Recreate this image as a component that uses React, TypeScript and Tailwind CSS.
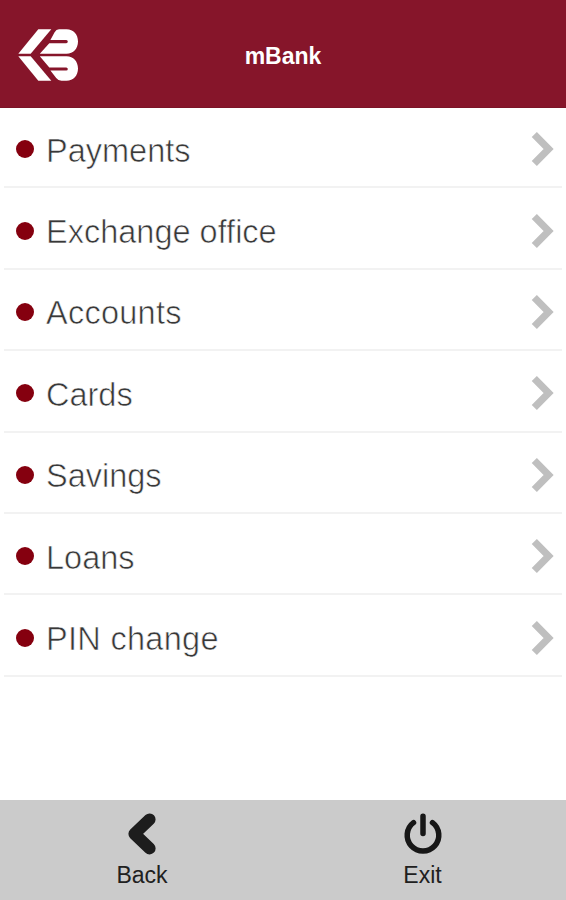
import clsx from "clsx";

type MenuItem = { label: string; className?: string };

const menuItems: MenuItem[] = [
  { label: "Payments" },
  { label: "Exchange office" },
  { label: "Accounts", className: "tracking-[0.25px]" },
  { label: "Cards" },
  { label: "Savings" },
  { label: "Loans" },
  { label: "PIN change", className: "tracking-[0.3px]" },
];

function Logo() {
  return (
    <svg className="mt-[3px] h-[52px] w-[61px]" viewBox="0 0 61 52" aria-hidden>
      <g fill="#ffffff">
        <path d="M20.3 0.3H33.3L12.7 24.8H0.3Z" />
        <path d="M41 0.3H48.5C55.5 0.3 60 5.5 60 12.5C60 19.5 55.5 24.8 48.5 24.8H21.8L31.3 14.2H48.2A1.6 1.6 0 0 0 48.2 11H32.4L36.6 3.2Q38.2 0.3 41 0.3Z" />
        <path d="M0.3 27.2H12.7L33.3 51.8H20.3Z" />
        <path d="M21.8 27.2H48.5C55.5 27.2 60 32.5 60 39.5C60 46.5 55.5 51.8 48.5 51.8H43.5Q40.3 51.8 38.2 49L32.4 41.6H48.2A1.6 1.6 0 0 0 48.2 38.4H31.3Z" />
      </g>
    </svg>
  );
}

function MenuRow({ label, className }: MenuItem) {
  return (
    <li className="mx-1 flex h-[81.4px] items-center border-b-2 border-[#f2f2f2] pr-[8px] pl-[12px]">
      <span className="mt-[5px] h-[18px] w-[18px] rounded-full bg-[#85000f]" />
      <span
        className={clsx(
          "mt-[8px] ml-[12px] flex-1 text-[32.5px] leading-10 text-[#383838] [-webkit-text-stroke:0.6px_white]",
          className,
        )}
      >
        {label}
      </span>
      <svg className="mt-[5px] h-9 w-[23px]" viewBox="0 0 23 36" fill="none" aria-hidden>
        <path d="M3.3 3.5L17.6 18L3.3 32.5" stroke="#bfbfbf" strokeWidth="7.2" />
      </svg>
    </li>
  );
}

export default function App() {
  return (
    <div className="flex h-[900px] w-[566px] flex-col bg-white font-['Liberation_Sans',Arial,sans-serif]">
      <header className="grid h-[108px] shrink-0 grid-cols-[1fr_auto_1fr] items-center border-b border-[#7b1427] bg-[#86152a] px-[18px]">
        <Logo />
        <h1 className="mt-[5px] text-[23px] leading-7 font-bold text-white">mBank</h1>
        <span />
      </header>

      <ul className="-mt-px flex-1">
        {menuItems.map((item) => (
          <MenuRow key={item.label} {...item} />
        ))}
      </ul>

      <footer className="grid h-[100px] shrink-0 grid-cols-2 bg-[#cbcbcb] text-[23px] leading-7 text-[#202020]">
        <button className="flex flex-col items-center pt-3 pl-px">
          <svg className="h-11 w-11" viewBox="0 0 44 44" fill="none" aria-hidden>
            <path
              d="M29.6 7.4L14.4 21.8L29.6 36.4"
              stroke="#1d1d1d"
              strokeWidth="12"
              strokeLinecap="round"
              strokeLinejoin="round"
            />
          </svg>
          <span className="mt-[5px]">Back</span>
        </button>
        <button className="flex flex-col items-center pt-3 pr-[4px]">
          <svg className="h-11 w-11" viewBox="0 0 44 44" fill="none" aria-hidden>
            <path
              d="M12.5 10.6A15.8 15.8 0 1 0 31.5 10.6M22 4.3V21.5"
              stroke="#171717"
              strokeWidth="5.5"
              strokeLinecap="round"
            />
          </svg>
          <span className="mt-[5px]">Exit</span>
        </button>
      </footer>
    </div>
  );
}
